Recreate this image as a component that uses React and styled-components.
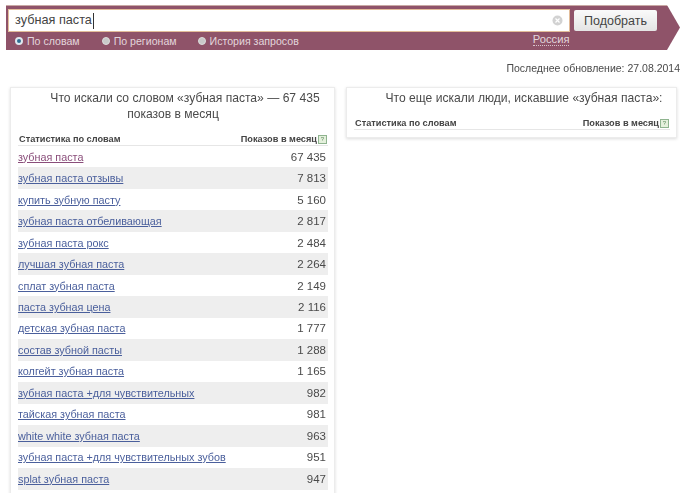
import React from "react";
import styled, { createGlobalStyle } from "styled-components";

const Global = createGlobalStyle`
  html, body {
    margin: 0;
    padding: 0;
    background: #fff;
    width: 688px;
    height: 493px;
    overflow: hidden;
    font-family: "Liberation Sans", Arial, sans-serif;
    color: #444;
  }
`;

const Page = styled.div`
  width: 688px;
  height: 493px;
  overflow: hidden;
  padding: 5px 0 0 6px;
  box-sizing: border-box;
  filter: blur(0.45px);
`;

const SearchBar = styled.div`
  width: 674px;
  height: 45px;
  background: #8f5369;
  border-top: 1px solid #c9a9a4;
  box-sizing: border-box;
  clip-path: polygon(0 0, 661px 0, 100% 50%, 661px 100%, 0 100%);
  padding: 3px 0 0 2px;
`;

const TopRow = styled.div`
  display: flex;
  align-items: center;
  gap: 4px;
`;

const SearchInput = styled.div`
  width: 548px;
  height: 21px;
  background: #fff;
  border: 1px solid #e2bd9a;
  display: flex;
  align-items: center;
  justify-content: space-between;
  padding: 0 6px;
  font-size: 12.7px;
  color: #444;
`;

const Caret = styled.span`
  display: inline-block;
  width: 1px;
  height: 16px;
  background: #333;
  vertical-align: middle;
  margin-left: 1px;
`;

const ClearIcon = styled.svg`
  width: 11px;
  height: 11px;
  flex: none;
`;

const PickButton = styled.div`
  width: 83px;
  height: 21px;
  background: linear-gradient(#fafafa, #e4e4e4);
  border-radius: 2px;
  display: flex;
  align-items: center;
  justify-content: center;
  font-size: 12.5px;
  color: #444;
`;

const BottomRow = styled.div`
  display: flex;
  align-items: center;
  height: 18px;
  padding-left: 7px;
  font-size: 10.6px;
  color: #e3d6dc;
`;

const RadioItem = styled.label`
  display: flex;
  align-items: center;
  gap: 4px;
  margin-right: ${(p) => p.$gap}px;
`;

const Dot = styled.span`
  width: 8px;
  height: 8px;
  border-radius: 50%;
  box-sizing: border-box;
  background: ${(p) => (p.$on ? "#2f6d93" : "#c9c9c9")};
  border: ${(p) => (p.$on ? "2px solid #dfe7ee" : "1px solid #ddd")};
`;

const Region = styled.span`
  margin-left: 234px;
  border-bottom: 1px dotted #d8c4cc;
  line-height: 12px;
  font-size: 11.2px;
  margin-top: -3px;
`;

const Updated = styled.div`
  text-align: right;
  font-size: 10.5px;
  color: #4a4a4a;
  width: 674px;
  margin-top: 12px;
  height: 16px;
`;

const Columns = styled.div`
  display: flex;
  align-items: flex-start;
  gap: 11px;
  margin-top: 9px;
  margin-left: 4px;
`;

const Card = styled.div`
  width: ${(p) => p.$w}px;
  background: #fff;
  border: 1px solid #ececec;
  box-shadow: 0 1px 3px rgba(0, 0, 0, 0.14);
  box-sizing: border-box;
  padding: 2px 6px ${(p) => p.$bottom}px 7px;
`;

const CardTitle = styled.div`
  font-size: 12.1px;
  line-height: 16px;
  color: #4a4a4a;
  text-align: center;
  text-indent: 24px;
  margin-bottom: 10px;
`;

const TableHead = styled.div`
  display: flex;
  justify-content: space-between;
  align-items: center;
  height: 13px;
  font-size: 9.2px;
  font-weight: bold;
  color: #444;
  padding: 0 1px;
  border-bottom: 1px solid #e6e6e6;
`;

const Hint = styled.span`
  display: inline-block;
  width: 7px;
  height: 7px;
  border: 1px solid #8fb48f;
  background: #e4f0dc;
  font-size: 6px;
  line-height: 7px;
  text-align: center;
  color: #5d8b5d;
  font-weight: normal;
  margin-left: 1px;
  vertical-align: 1px;
`;

const Row = styled.div`
  display: flex;
  justify-content: space-between;
  align-items: center;
  height: 21.47px;
  background: ${(p) => (p.$alt ? "#eeeeee" : "#fff")};
  font-size: 10.8px;
  padding: 0 2px 0 0;
`;

const Phrase = styled.a`
  color: ${(p) => (p.$visited ? "#8a4d7a" : "#4a5f9c")};
  text-decoration: underline;
`;

const Count = styled.span`
  font-size: 11.5px;
  color: #4a4a4a;
`;

const rows = [
  ["зубная паста", "67 435"],
  ["зубная паста отзывы", "7 813"],
  ["купить зубную пасту", "5 160"],
  ["зубная паста отбеливающая", "2 817"],
  ["зубная паста рокс", "2 484"],
  ["лучшая зубная паста", "2 264"],
  ["сплат зубная паста", "2 149"],
  ["паста зубная цена", "2 116"],
  ["детская зубная паста", "1 777"],
  ["состав зубной пасты", "1 288"],
  ["колгейт зубная паста", "1 165"],
  ["зубная паста +для чувствительных", "982"],
  ["тайская зубная паста", "981"],
  ["white white зубная паста", "963"],
  ["зубная паста +для чувствительных зубов", "951"],
  ["splat зубная паста", "947"],
];

function Head() {
  return (
    <TableHead>
      <span>Статистика по словам</span>
      <span>
        Показов в месяц<Hint>?</Hint>
      </span>
    </TableHead>
  );
}

export default function App() {
  return (
    <Page>
      <Global />
      <SearchBar>
        <TopRow>
          <SearchInput>
            <span>
              зубная паста<Caret />
            </span>
            <ClearIcon viewBox="0 0 11 11">
              <circle cx="5.5" cy="5.5" r="5" fill="#d2d2d2" />
              <path d="M3.5 3.5l4 4M7.5 3.5l-4 4" stroke="#fff" strokeWidth="1.2" />
            </ClearIcon>
          </SearchInput>
          <PickButton>Подобрать</PickButton>
        </TopRow>
        <BottomRow>
          <RadioItem $gap={22}>
            <Dot $on />
            По словам
          </RadioItem>
          <RadioItem $gap={21}>
            <Dot />
            По регионам
          </RadioItem>
          <RadioItem $gap={0}>
            <Dot />
            История запросов
          </RadioItem>
          <Region>Россия</Region>
        </BottomRow>
      </SearchBar>
      <Updated>Последнее обновление: 27.08.2014</Updated>
      <Columns>
        <Card $w={325} $bottom={12}>
          <CardTitle>
            Что искали со словом «зубная паста» — 67 435 показов в месяц
          </CardTitle>
          <Head />
          {rows.map((r, i) => (
            <Row key={r[0]} $alt={i % 2 === 1}>
              <Phrase $visited={i === 0}>{r[0]}</Phrase>
              <Count>{r[1]}</Count>
            </Row>
          ))}
        </Card>
        <Card $w={331} $bottom={7}>
          <CardTitle>Что еще искали люди, искавшие «зубная паста»:</CardTitle>
          <Head />
        </Card>
      </Columns>
    </Page>
  );
}
